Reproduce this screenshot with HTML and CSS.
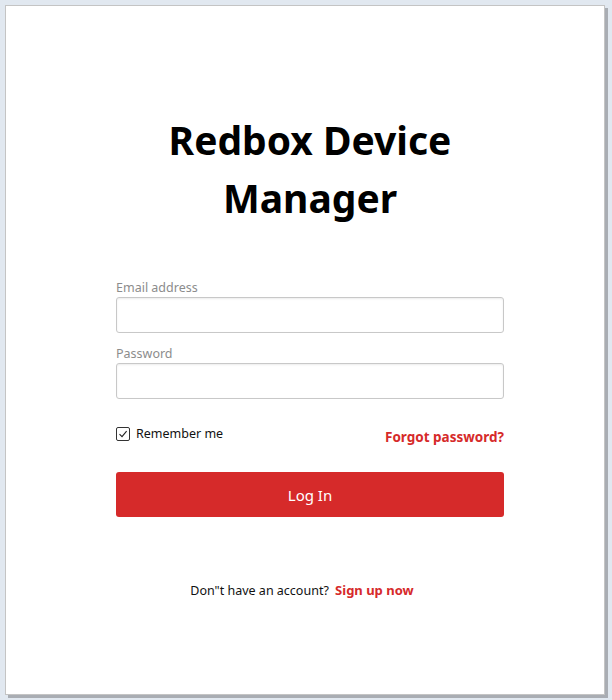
FILE: index.html
```html
<!DOCTYPE html>
<html lang="en">
  <head>
    <meta charset="UTF-8" />
    <meta name="viewport" content="width=device-width, initial-scale=1.0" />
    <title>Redbox Device Manager</title>
    <link rel="stylesheet" href="styles.css">
  </head>
  <body>
    <div class="card">
      <h1 class="title">Redbox Device Manager</h1>

      <form class="login-form" onsubmit="return false">
        <label class="field-label" for="email">Email address</label>
        <input class="field" type="email" id="email" />

        <label class="field-label" for="password">Password</label>
        <input class="field" type="password" id="password" />

        <div class="options">
          <label class="remember">
            <span class="check">
              <svg width="10" height="10" viewBox="0 0 10 10">
                <path d="M1.5 5.2 L4 7.6 L8.6 2.2" fill="none" stroke="#222" stroke-width="1.1" />
              </svg>
            </span>
            Remember me
          </label>
          <a href="#" class="link forgot">Forgot password?</a>
        </div>

        <button class="login-btn" type="submit">Log In</button>
      </form>

      <p class="signup">
        Don"t have an account? <a href="#" class="link signup-link">Sign up now</a>
      </p>
    </div>
  </body>
</html>
```

FILE: styles.css
```css
body {
  margin: 0;
  padding: 5px;
  background: #e1e8f0;
  font-family: "Noto Sans", "Open Sans", sans-serif;
  color: #111;
}
.card {
  background: white;
  border: 1px solid #c4c4c4;
  box-shadow: 3px 3px 0 #a9adb3;
  height: 690px;
  box-sizing: border-box;
  width: 600px;
  padding: 105px 0 0 10px;
}
.title {
  margin: 0 auto;
  width: 320px;
  text-align: center;
  font-size: 39px;
  line-height: 58px;
  font-weight: 700;
  color: #000;
}
.login-form {
  width: 388px;
  margin: 53px auto 0;
  display: flex;
  flex-direction: column;
}
.field-label {
  font-size: 12.5px;
  color: #8c8c8c;
  line-height: 16px;
}
.field {
  height: 36px;
  box-sizing: border-box;
  border: 1px solid #c8c8c8;
  border-radius: 3px;
  box-shadow: inset 0 1px 2px rgba(0, 0, 0, 0.08);
  margin: 1px 0 13px;
  font-size: 14px;
  padding: 0 8px;
}
.options {
  display: flex;
  justify-content: space-between;
  align-items: flex-end;
  margin-top: 13px;
}
.remember {
  display: flex;
  align-items: center;
  gap: 6px;
  font-size: 12.5px;
  color: #111;
}
.check {
  width: 14px;
  height: 14px;
  box-sizing: border-box;
  border: 1px solid #333;
  border-radius: 2px;
  display: flex;
  align-items: center;
  justify-content: center;
}
.link {
  color: #d62a2a;
  font-weight: 700;
  text-decoration: none;
}
.forgot {
  font-size: 13.5px;
  margin-bottom: -4px;
}
.login-btn {
  margin-top: 30px;
  height: 45px;
  background: #d62a2a;
  color: white;
  border: none;
  border-radius: 3px;
  font-family: inherit;
  font-size: 15px;
}
.signup {
  margin: 64px 0 0;
  padding-right: 16px;
  text-align: center;
  font-size: 12.5px;
}
.signup-link {
  font-size: 13px;
  margin-left: 3px;
}
```
